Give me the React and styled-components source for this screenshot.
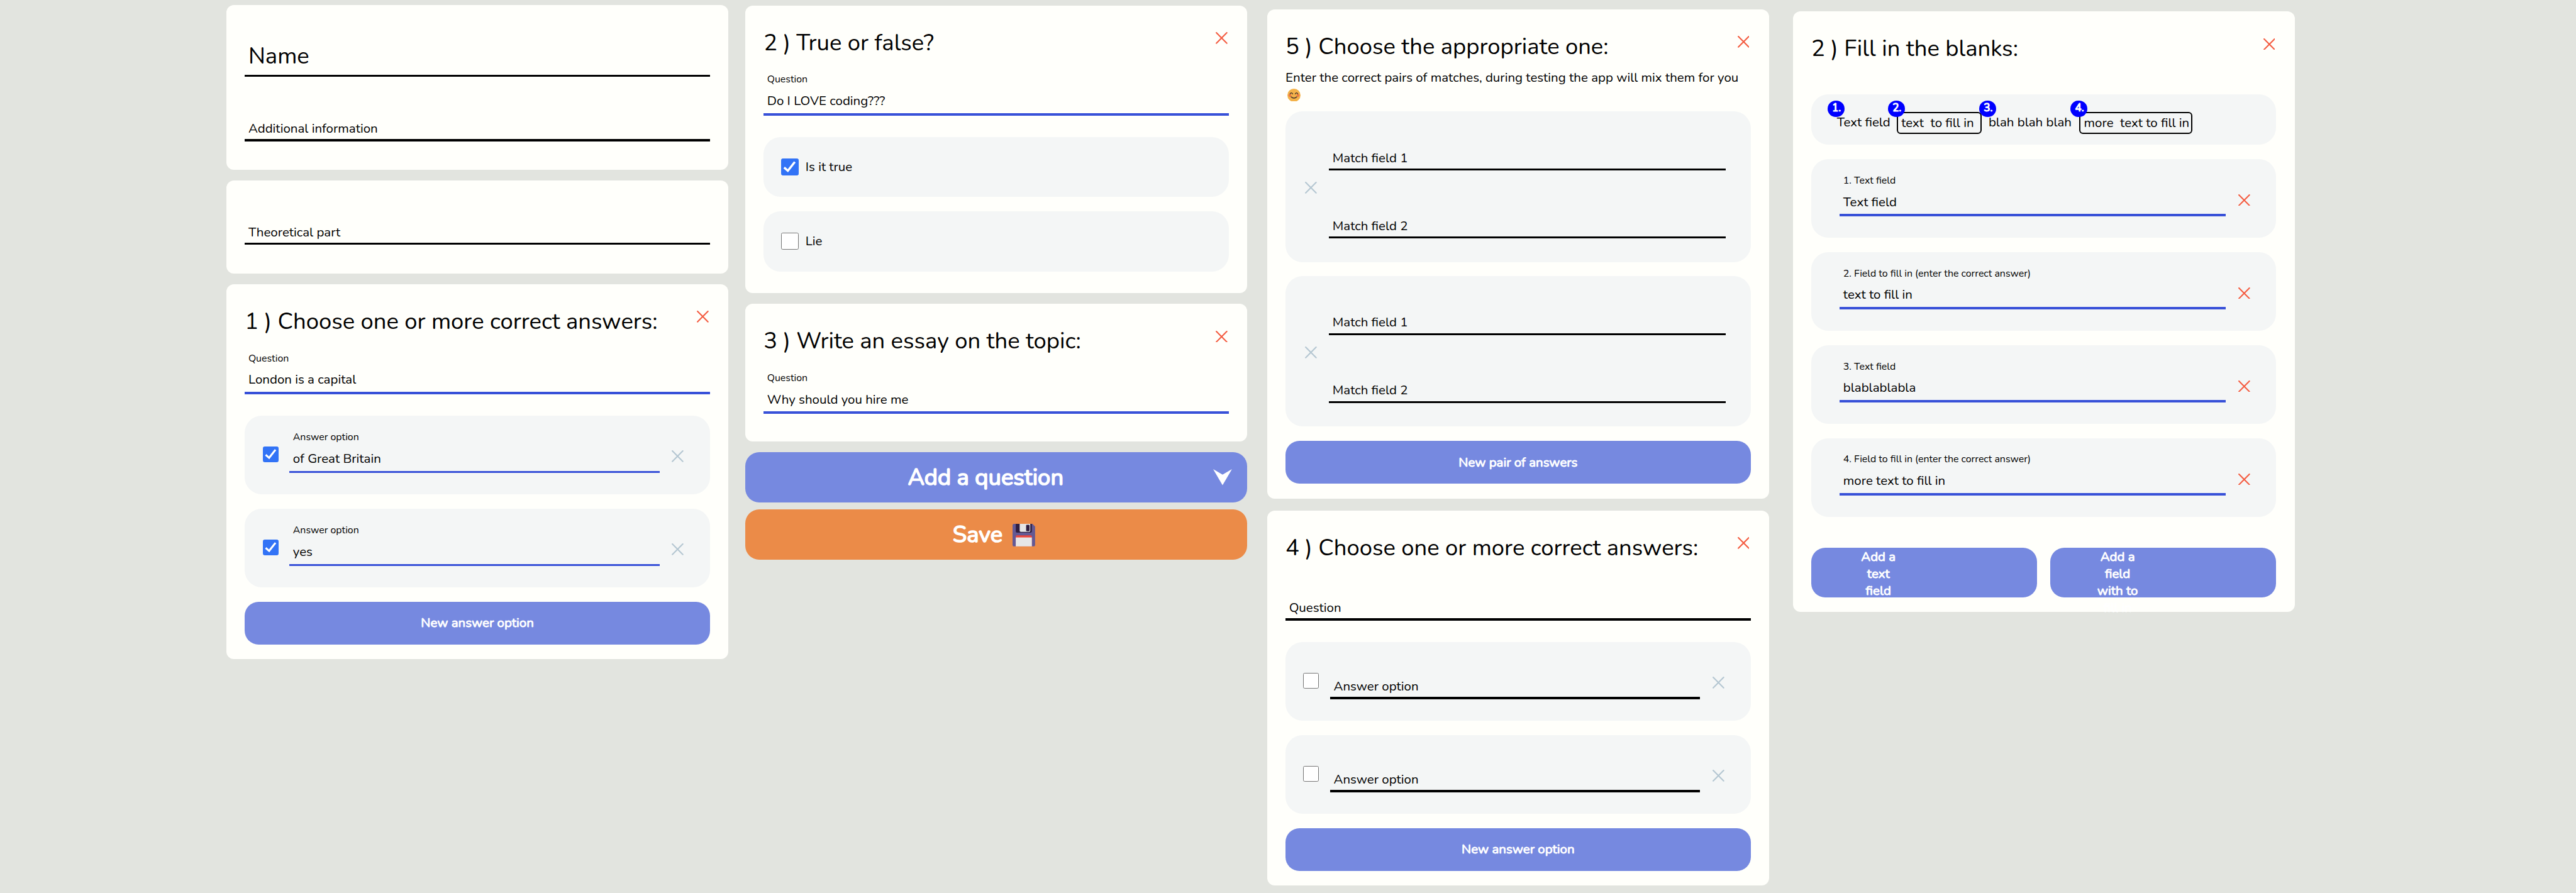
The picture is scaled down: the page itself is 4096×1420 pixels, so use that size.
import React from 'react';
import styled, { createGlobalStyle, css } from 'styled-components';

// All design dimensions go through u(), which applies the page scale.
const SCALE = 4096 / 4797;
const u = (n) => `${(n * SCALE).toFixed(3)}px`;

const color = {
  page: '#e2e4df',
  card: '#fffffb',
  panel: '#f4f6f6',
  text: '#000000',
  active: '#3851d8',
  button: '#7689e0',
  save: '#eb8b48',
  danger: '#f45d42',
  muted: '#b5c7d2',
  check: '#3273f6',
  badge: '#0000ff',
};

const GlobalStyle = createGlobalStyle`
  *, *::before, *::after { box-sizing: border-box; }
  body {
    margin: 0;
    background: ${color.page};
    color: ${color.text};
    font-family: Nunito, Lato, "Noto Sans", sans-serif;
    font-size: ${u(24)};
    line-height: ${u(32.7)};
  }
`;

const Page = styled.main`
  display: flex;
  align-items: flex-start;
  width: 4096px;
  height: 1420px;
  padding-left: ${u(422)};
  overflow: hidden;
`;

const Column = styled.section`
  display: flex;
  flex-direction: column;
  flex: none;
  width: ${u(934)};
  margin-left: ${(p) => u(p.$left || 0)};
  padding-top: ${(p) => u(p.$top)};
  gap: ${(p) => u(p.$gap || 20)};
`;

const Card = styled.article`
  display: flex;
  flex-direction: column;
  padding: ${(p) => u(p.$top ?? 40)} ${u(34)} ${(p) => u(p.$bottom)};
  border-radius: ${u(14)};
  background: ${color.card};
`;

const CardHeader = styled.header`
  display: flex;
  justify-content: space-between;
  align-items: flex-start;
  height: ${u(58)};
  padding-right: ${u(2.5)};
`;

const Title = styled.h2`
  margin: 0;
  padding-top: ${u(1)};
  font-size: ${u(42.667)};
  font-weight: 400;
  line-height: ${u(58)};
  white-space: nowrap;
`;

const Description = styled.p`
  margin: ${u(13.5)} 0 ${u(-26)};
  white-space: nowrap;
`;

const CrossButton = styled.button`
  flex: none;
  display: flex;
  width: ${u(22)};
  height: ${u(22)};
  margin: ${(p) => u(p.$top)} 0 0 ${(p) => u(p.$left || 0)};
  padding: 0;
  border: 0;
  background: none;
  color: ${(p) => (p.$muted ? color.muted : color.danger)};

  svg { width: 100%; height: 100%; }
`;

const FieldBox = styled.label`
  display: flex;
  flex-direction: column;
  justify-content: flex-end;
  flex: none;
  width: ${(p) => (p.$width ? u(p.$width) : '100%')};
  height: ${(p) => u(p.$height)};
  margin-left: ${(p) => u(p.$left || 0)};
  white-space: nowrap;
`;

const FieldLabel = styled.span`
  padding-left: ${u(6.5)};
  margin-bottom: ${u(10.7)};
  font-size: ${u(18.667)};
  line-height: ${u(25.5)};
`;

const FieldText = styled.span`
  padding-left: ${u(6.5)};
  margin-bottom: ${(p) => u(p.$filled ? 5.5 : 2.7)};

  ${(p) => p.$large && css`
    font-size: ${u(42.667)};
    line-height: ${u(58)};
    margin-bottom: ${u(4.5)};
  `}
`;

const Underline = styled.span`
  height: ${u(4.2)};
  background: ${(p) => (p.$filled ? color.active : color.text)};
`;

const Panels = styled.div`
  display: flex;
  flex-direction: column;
  gap: ${u(26.6)};
  margin-top: ${(p) => u(p.$top ?? 40)};
`;

const Panel = styled.div`
  display: flex;
  align-items: ${(p) => (p.$center ? 'center' : 'flex-start')};
  height: ${(p) => u(p.$height || 146.7)};
  padding-left: ${(p) => u(p.$left ?? 33)};
  border-radius: ${u(32)};
  background: ${color.panel};
  white-space: nowrap;
`;

const CheckFrame = styled.span`
  flex: none;
  display: block;
  width: ${(p) => u(p.$size)};
  height: ${(p) => u(p.$size)};
  margin-top: ${(p) => u(p.$top || 0)};
  border: 1px solid ${(p) => (p.$checked ? color.check : '#767676')};
  border-radius: ${u(3)};
  background: ${(p) => (p.$checked ? color.check : '#ffffff')};

  svg { display: block; width: 100%; height: 100%; }
`;

const OptionText = styled.span`
  margin-left: ${u(13)};
`;

const MatchFields = styled.div`
  display: flex;
  flex-direction: column;
  margin-left: ${u(23)};
`;

const strokeText = css`
  color: #ffffff;
  font-weight: 400;
  -webkit-text-stroke: 0.046em #ffffff;
`;

const WideButton = styled.button`
  display: flex;
  justify-content: center;
  align-items: center;
  height: ${u(80)};
  margin-top: ${u(26.5)};
  padding: ${u(1.5)} 0 0;
  border: 0;
  border-radius: ${u(26)};
  background: ${color.button};
  font: inherit;
  ${strokeText}
`;

const MainButton = styled.button`
  display: flex;
  justify-content: center;
  align-items: center;
  height: ${u(93)};
  margin-bottom: ${(p) => u(p.$below || 0)};
  padding: ${u(2.5)} ${u(28)} 0 0;
  border: 0;
  border-radius: ${u(26)};
  background: ${(p) => (p.$save ? color.save : color.button)};
  font-family: inherit;
  font-size: ${u(42.667)};
  line-height: ${u(58)};
  ${strokeText}
`;

const MainLabel = styled.span`
  flex: ${(p) => (p.$grow ? 1 : 'none')};
  padding-left: ${(p) => u(p.$shift || 0)};
  text-align: center;
`;

const Arrow = styled.svg`
  width: ${u(35)};
  height: ${u(30)};
  margin-bottom: ${u(3)};
`;

const Floppy = styled.svg`
  width: ${u(42)};
  height: ${u(42)};
  margin-left: ${u(19)};
`;

const Smile = styled.svg`
  display: inline-block;
  width: ${u(24.5)};
  height: ${u(24.5)};
  margin-left: ${u(3.5)};
  vertical-align: ${u(-4.5)};
`;

const Chunk = styled.span`
  position: relative;
  flex: none;
  width: ${(p) => u(p.$width)};
  height: ${u(41)};
  margin-left: ${(p) => u(p.$left || 0)};
  margin-top: ${u(32)};
  padding-top: ${u(4.4)};
  padding-left: ${u(1.2)};
  line-height: ${u(32.7)};
`;

const Blank = styled(Chunk)`
  padding: ${u(3.4)} 0 0 ${u(6.4)};
  border: 2px solid #000;
  border-radius: ${u(7)};
`;

const Badge = styled.span`
  position: absolute;
  top: ${(p) => (p.$framed ? `calc(${u(-21)} - 2px)` : u(-21))};
  left: ${(p) => (p.$framed ? `calc(${u(-16)} - 2px)` : u(-16))};
  width: ${u(31)};
  height: ${u(31)};
  border-radius: 50%;
  background: ${color.badge};
  font-size: ${u(20)};
  line-height: ${u(29)};
  text-align: center;
  padding-left: ${u(2)};
  ${strokeText}
  -webkit-text-stroke-width: 0.07em;
`;

const ButtonRow = styled.div`
  display: flex;
  gap: ${u(25)};
  margin-top: ${u(57)};
`;

const AddFieldButton = styled.button`
  display: flex;
  align-items: flex-start;
  flex: 1;
  height: ${u(93)};
  padding: ${u(1.2)} 0 0 ${u(83)};
  border: 0;
  border-radius: ${u(26)};
  background: ${color.button};
  font: inherit;
  line-height: ${u(31.8)};
  ${strokeText}

  span {
    width: ${u(84)};
    text-align: center;
    white-space: pre-line;
  }
`;

const Cross = ({ top = 10, left, muted }) => (
  <CrossButton $top={top} $left={left} $muted={muted} type="button">
    <svg viewBox="0 0 22 22" fill="none" stroke="currentColor" strokeWidth="2.5" strokeLinecap="round">
      <path d="M1.3 1.3L20.7 20.7M20.7 1.3L1.3 20.7" />
    </svg>
  </CrossButton>
);

const Check = ({ checked, size = 29.5, top }) => (
  <CheckFrame $checked={checked} $size={size} $top={top}>
    {checked && (
      <svg viewBox="1 1 28 28" fill="none" stroke="#fff" strokeWidth="3.8">
        <path d="M5.2 15.8L11.8 21.6L24 6" />
      </svg>
    )}
  </CheckFrame>
);

const Field = ({ label, value, height = 107, width, left, large }) => (
  <FieldBox $height={height} $width={width} $left={left}>
    {value && <FieldLabel>{label}</FieldLabel>}
    <FieldText $filled={Boolean(value)} $large={large}>{value || label}</FieldText>
    <Underline $filled={Boolean(value)} />
  </FieldBox>
);

const QuestionHeader = ({ children }) => (
  <CardHeader>
    <Title>{children}</Title>
    <Cross />
  </CardHeader>
);

const AnswerPanel = ({ checked, value }) => (
  <Panel>
    <Check checked={checked} top={58} />
    <Field label="Answer option" value={value} width={689} left={20.5} />
    <Cross top={65} left={23} muted />
  </Panel>
);

const MatchPanel = () => (
  <Panel $height={280} $left={36}>
    <Cross top={131} muted />
    <MatchFields>
      <Field label="Match field 1" width={739} height={110} />
      <Field label="Match field 2" width={739} height={126.5} />
    </MatchFields>
  </Panel>
);

const BlankPanel = ({ label, value }) => (
  <Panel $left={53}>
    <Field label={label} value={value} width={719} height={106} />
    <Cross top={65} left={23} />
  </Panel>
);

const blanks = [
  ['1. Text field', 'Text field'],
  ['2. Field to fill in (enter the correct answer)', 'text to fill in'],
  ['3. Text field', 'blablablabla'],
  ['4. Field to fill in (enter the correct answer)', 'more text to fill in'],
];

export default function App() {
  return (
    <>
      <GlobalStyle />
      <Page>
        <Column $top={9}>
          <Card $top={0} $bottom={53}>
            <Field label="Name" height={134} large />
            <Field label="Additional information" height={120} />
          </Card>
          <Card $top={0} $bottom={53}>
            <Field label="Theoretical part" height={120} />
          </Card>
          <Card $bottom={27.5}>
            <QuestionHeader>1 ) Choose one or more correct answers:</QuestionHeader>
            <Field label="Question" value="London is a capital" />
            <Panels>
              <AnswerPanel checked value="of Great Britain" />
              <AnswerPanel checked value="yes" />
            </Panels>
            <WideButton type="button">New answer option</WideButton>
          </Card>
        </Column>

        <Column $left={32} $top={10}>
          <Card $bottom={40}>
            <QuestionHeader>2 ) True or false?</QuestionHeader>
            <Field label="Question" value="Do I LOVE coding???" />
            <Panels>
              <Panel $height={112} $center>
                <Check checked size={32} />
                <OptionText>Is it true</OptionText>
              </Panel>
              <Panel $height={112} $center>
                <Check size={32} />
                <OptionText>Lie</OptionText>
              </Panel>
            </Panels>
          </Card>
          <Card $bottom={52}>
            <QuestionHeader>3 ) Write an essay on the topic:</QuestionHeader>
            <Field label="Question" value="Why should you hire me" />
          </Card>
          <MainButton type="button" $below={-6.5}>
            <MainLabel $grow $shift={24}>Add a question</MainLabel>
            <Arrow viewBox="0 0 35 30" fill="#fff">
              <path d="M0 0L17.5 10.3L35 0L17.5 30Z" />
            </Arrow>
          </MainButton>
          <MainButton type="button" $save>
            <MainLabel $shift={20}>Save</MainLabel>
            <Floppy viewBox="0 0 42 42">
              <path d="M3 0H37L42 5V39Q42 42 39 42H3Q0 42 0 39V3Q0 0 3 0Z" fill="#635994" />
              <path d="M6 0H36V14Q36 16.5 33.5 16.5H8.5Q6 16.5 6 14Z" fill="#2f1e40" />
              <path d="M13.3 0H33V13Q33 15 31 15H15.3Q13.3 15 13.3 13Z" fill="#e6e6e6" />
              <rect x="25.3" y="1.7" width="6.4" height="12" rx="1.6" fill="#2f1e40" />
              <path d="M6 42V23.3Q6 21.3 8 21.3H34Q36 21.3 36 23.3V42Z" fill="#e8463d" />
              <rect x="6" y="25.3" width="30" height="16.7" fill="#e6e6e6" />
            </Floppy>
          </MainButton>
        </Column>

        <Column $left={38} $top={17} $gap={22}>
          <Card $bottom={27.5}>
            <QuestionHeader>5 ) Choose the appropriate one:</QuestionHeader>
            <Description>
              Enter the correct pairs of matches, during testing the app will mix them for you
              <br />
              <Smile viewBox="0 0 24 24" fill="none">
                <circle cx="12" cy="12" r="12" fill="#f3b24a" />
                <circle cx="4.6" cy="12.4" r="2.6" fill="#ef7b45" />
                <circle cx="19.4" cy="12.4" r="2.6" fill="#ef7b45" />
                <path
                  d="M5 9.6Q7.2 5.6 9.6 9.6M14.4 9.6Q16.8 5.6 19 9.6M6.8 15Q12 19.6 17.2 15"
                  stroke="#45302b"
                  strokeWidth="1.6"
                  strokeLinecap="round"
                />
              </Smile>
            </Description>
            <Panels>
              <MatchPanel />
              <MatchPanel />
            </Panels>
            <WideButton type="button">New pair of answers</WideButton>
          </Card>
          <Card $bottom={27.5}>
            <QuestionHeader>4 ) Choose one or more correct answers:</QuestionHeader>
            <Field label="Question" />
            <Panels>
              <AnswerPanel />
              <AnswerPanel />
            </Panels>
            <WideButton type="button">New answer option</WideButton>
          </Card>
        </Column>

        <Column $left={45} $top={21}>
          <Card $bottom={27}>
            <QuestionHeader>2 ) Fill in the blanks:</QuestionHeader>
            <Panels $top={57}>
              <Panel $height={94} $left={46.5}>
                <Chunk $width={99.5}>
                  <Badge>1.</Badge>
                  Text field
                </Chunk>
                <Blank $width={158} $left={13}>
                  <Badge $framed>2.</Badge>
                  text{'\u00a0 '}to fill in
                </Blank>
                <Chunk $width={157} $left={12}>
                  <Badge>3.</Badge>
                  blah blah blah
                </Chunk>
                <Blank $width={211} $left={13}>
                  <Badge $framed>4.</Badge>
                  more{'\u00a0 '}text to fill in
                </Blank>
              </Panel>
              {blanks.map(([label, value]) => (
                <BlankPanel key={label} label={label} value={value} />
              ))}
            </Panels>
            <ButtonRow>
              <AddFieldButton type="button">
                <span>{'Add a\ntext\nfield'}</span>
              </AddFieldButton>
              <AddFieldButton type="button">
                <span>{'Add a\nfield\nwith to\nfill in'}</span>
              </AddFieldButton>
            </ButtonRow>
          </Card>
        </Column>
      </Page>
    </>
  );
}
